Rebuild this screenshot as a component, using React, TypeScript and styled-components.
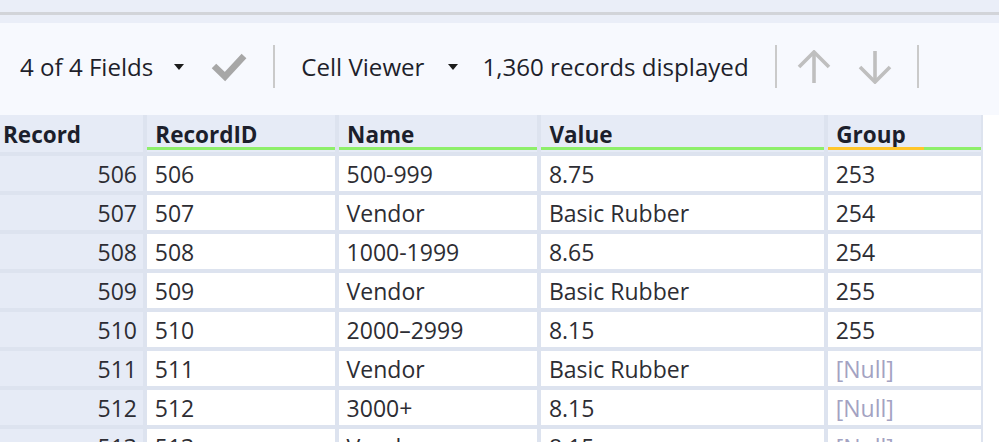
import React from "react";
import styled, { createGlobalStyle } from "styled-components";

const GlobalStyle = createGlobalStyle`
  html, body {
    margin: 0;
    padding: 0;
    background: #ffffff;
  }
  body {
    font-family: "Open Sans", "Noto Sans", sans-serif;
    overflow: hidden;
  }
`;

const Window = styled.div`
  width: 999px;
  height: 442px;
  overflow: hidden;
  display: flex;
  flex-direction: column;
  background: #ffffff;
`;

const TopStrip = styled.div`
  flex-shrink: 0;
  height: 12px;
  background: #eaeef8;
  border-bottom: 3px solid #d2d4d9;
`;

const SubStrip = styled.div`
  flex-shrink: 0;
  height: 8px;
  background: #eaeef8;
`;

const Toolbar = styled.div`
  flex-shrink: 0;
  box-sizing: border-box;
  height: 92px;
  padding: 0 0 5px 20px;
  display: flex;
  align-items: center;
  gap: 24px;
  background: #f7f9fe;
  color: #1e1f2b;
  font-size: 24.1px;
`;

const ToolLabel = styled.span`
  white-space: nowrap;
  line-height: 32px;
`;

const Caret = styled.span<{ $shift: number }>`
  width: 0;
  height: 0;
  margin-left: ${(p) => p.$shift}px;
  border-left: 5.5px solid transparent;
  border-right: 5.5px solid transparent;
  border-top: 6px solid #1c1c1c;
`;

const Separator = styled.span`
  width: 2px;
  height: 43px;
  margin: 0 2px;
  background: #cacaca;
`;

const IconButton = styled.span<{ $shift?: number }>`
  display: flex;
  align-items: center;
  justify-content: center;
  margin-left: ${(p) => p.$shift ?? 0}px;
`;

const ArrowGroup = styled.div`
  display: flex;
  align-items: center;
  gap: 27px;
  margin: 0 -1px 0 -6px;
`;

const Grid = styled.div`
  display: grid;
  grid-template-columns: 143px 187.5px 198px 282.5px 153px;
  grid-template-rows: 37px;
  grid-auto-rows: 35px;
  gap: 4px 4.3px;
  width: fit-content;
  padding-right: 2px;
  background: #dde3ef;
`;

const HeaderCell = styled.div<{ $bar?: string }>`
  display: flex;
  flex-direction: column;
  justify-content: flex-end;
  background: #e6ebf6;
  color: #1c1f2c;
  font-size: 22.5px;
  font-weight: 700;

  &::after {
    content: "";
    display: block;
    height: 3px;
    margin-bottom: 2px;
    background: ${(p) => p.$bar ?? "transparent"};
  }
`;

const HeaderLabel = styled.span<{ $pad: number }>`
  padding-left: ${(p) => p.$pad}px;
  line-height: 25px;
  white-space: nowrap;
`;

const RecordCell = styled.div`
  box-sizing: border-box;
  padding: 2px 6px 0 0;
  background: #e6ebf6;
  color: #2d2d33;
  font-size: 23px;
  line-height: 32px;
  text-align: right;
  overflow: hidden;
`;

const Cell = styled.div<{ $null?: boolean }>`
  box-sizing: border-box;
  padding: 2px 0 0 7.5px;
  background: #ffffff;
  color: ${(p) => (p.$null ? "#a3a2c2" : "#2d2d33")};
  font-size: 23px;
  line-height: 32px;
  white-space: nowrap;
  overflow: hidden;
`;

const GREEN = "#8eef6a";

const columns = [
  { label: "RecordID", bar: GREEN },
  { label: "Name", bar: GREEN },
  { label: "Value", bar: GREEN },
  { label: "Group", bar: `linear-gradient(to right, #ffc62a 0 96px, ${GREEN} 96px)` },
];

const rows: [number, string, string, string | null][] = [
  [506, "500-999", "8.75", "253"],
  [507, "Vendor", "Basic Rubber", "254"],
  [508, "1000-1999", "8.65", "254"],
  [509, "Vendor", "Basic Rubber", "255"],
  [510, "2000\u20132999", "8.15", "255"],
  [511, "Vendor", "Basic Rubber", null],
  [512, "3000+", "8.15", null],
  [513, "Vendor", "8.15", null],
];

const CheckIcon = () => (
  <svg width="36" height="30" viewBox="0 0 36 30">
    <polyline
      points="3,14 14,24.5 33,4"
      fill="none"
      stroke="#a7a7a7"
      strokeWidth="6.5"
      strokeLinejoin="miter"
    />
  </svg>
);

const ArrowIcon = ({ down }: { down?: boolean }) => (
  <svg
    width="34"
    height="34"
    viewBox="0 0 34 34"
    style={down ? { transform: "rotate(180deg)" } : undefined}
  >
    <g fill="none" stroke="#bfbfbf" strokeWidth="3.6">
      <line x1="17" y1="2" x2="17" y2="33" />
      <polyline points="2,17 17,2 32,17" />
    </g>
  </svg>
);

export default function App() {
  return (
    <>
      <GlobalStyle />
      <Window>
        <TopStrip />
        <SubStrip />
        <Toolbar>
          <ToolLabel>4 of 4 Fields</ToolLabel>
          <Caret $shift={-3} />
          <IconButton $shift={3}>
            <CheckIcon />
          </IconButton>
          <Separator />
          <ToolLabel>Cell Viewer</ToolLabel>
          <Caret $shift={0} />
          <ToolLabel>1,360 records displayed</ToolLabel>
          <Separator />
          <ArrowGroup>
            <IconButton>
              <ArrowIcon />
            </IconButton>
            <IconButton>
              <ArrowIcon down />
            </IconButton>
          </ArrowGroup>
          <Separator />
        </Toolbar>
        <Grid>
          <HeaderCell>
            <HeaderLabel $pad={3}>Record</HeaderLabel>
          </HeaderCell>
          {columns.map((c) => (
            <HeaderCell key={c.label} $bar={c.bar}>
              <HeaderLabel $pad={8}>{c.label}</HeaderLabel>
            </HeaderCell>
          ))}
          {rows.map(([id, name, value, group]) => (
            <React.Fragment key={id}>
              <RecordCell>{id}</RecordCell>
              <Cell>{id}</Cell>
              <Cell>{name}</Cell>
              <Cell>{value}</Cell>
              <Cell $null={group === null}>{group ?? "[Null]"}</Cell>
            </React.Fragment>
          ))}
        </Grid>
      </Window>
    </>
  );
}
